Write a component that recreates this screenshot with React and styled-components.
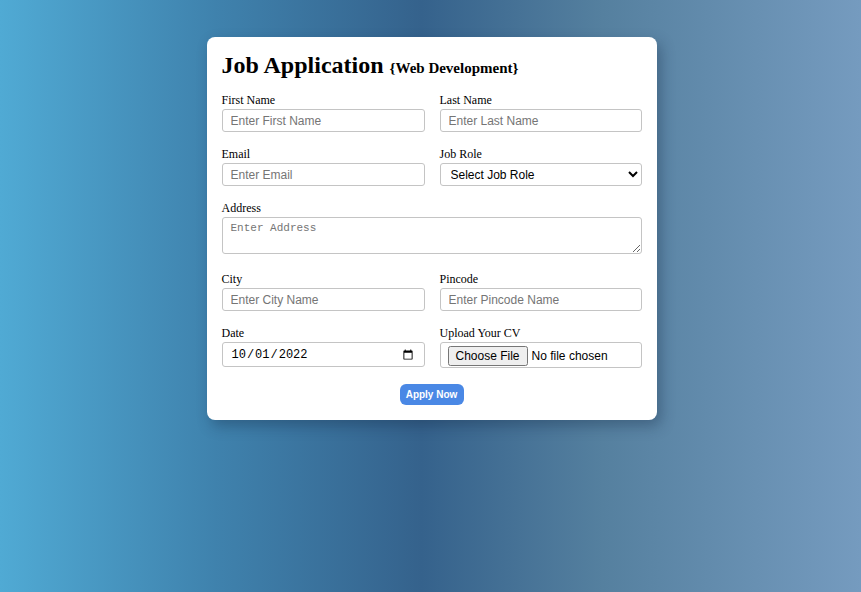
import React from 'react'
import styled, { createGlobalStyle } from 'styled-components'

const GlobalStyle = createGlobalStyle`
  html, body {
    margin: 0;
    padding: 0;
  }
  body {
    min-height: 100vh;
    background: linear-gradient(to right, #50aad4 0%, #3f82ad 25%, #35628c 49%, #55809f 70%, #759bbf 100%);
    font-family: "Liberation Serif", "Times New Roman", serif;
  }
`

const Page = styled.div`
  min-height: 100vh;
  display: flex;
  justify-content: center;
  align-items: flex-start;
  padding: 37px 0 0 2px;
  box-sizing: border-box;
`

const Card = styled.form`
  width: 450px;
  box-sizing: border-box;
  background: #ffffff;
  border-radius: 8px;
  padding: 13px 15px 15px;
  box-shadow: 4px 6px 14px rgba(20, 40, 70, 0.35);
`

const Title = styled.h1`
  margin: 0 0 10px;
  font-size: 24px;
  font-weight: bold;
  line-height: 30px;
  color: #000;

  span {
    font-size: 15px;
  }
`

const Grid = styled.div`
  display: grid;
  grid-template-columns: 203px 202px;
  column-gap: 15px;
  row-gap: 15px;
`

const Field = styled.div`
  display: flex;
  flex-direction: column;
  min-width: 0;
  grid-column: ${(p) => (p.wide ? '1 / 3' : 'auto')};
`

const Label = styled.label`
  font-size: 12px;
  line-height: 14px;
  margin-bottom: 2px;
  color: #000;
`

const Input = styled.input`
  width: 100%;
  height: 23px;
  box-sizing: border-box;
  border: 1px solid #c4c4c4;
  border-radius: 3px;
  padding: 0 8px;
  font-family: "Liberation Sans", Arial, sans-serif;
  font-size: 12px;
  color: #000;
  outline: none;

  &::placeholder {
    color: #757575;
  }
`

const DateInput = styled(Input)`
  height: 25px;
  font-family: "Liberation Mono", monospace;
`

const FileInput = styled(Input)`
  height: 26px;
  padding: 3px 7px;
  font-size: 12px;
`

const Select = styled.select`
  width: 100%;
  height: 23px;
  box-sizing: border-box;
  border: 1px solid #c4c4c4;
  border-radius: 3px;
  padding: 0 6px;
  font-family: "Liberation Sans", Arial, sans-serif;
  font-size: 12px;
  color: #000;
  background: #fff;
`

const TextArea = styled.textarea`
  width: 100%;
  height: 37px;
  margin-bottom: 3px;
  box-sizing: border-box;
  border: 1px solid #c4c4c4;
  border-radius: 3px;
  padding: 4px 8px;
  font-family: "Liberation Mono", monospace;
  font-size: 11px;
  resize: vertical;

  &::placeholder {
    color: #757575;
  }
`

const Actions = styled.div`
  display: flex;
  justify-content: center;
  margin-top: 16px;
`

const ApplyButton = styled.button`
  width: 64px;
  height: 21px;
  border: none;
  border-radius: 6px;
  background: #4a88e5;
  color: #fff;
  font-family: "Liberation Sans", Arial, sans-serif;
  font-size: 10px;
  font-weight: bold;
  cursor: pointer;
  padding: 0;
`

export default function App() {
  return (
    <>
      <GlobalStyle />
      <Page>
        <Card onSubmit={(e) => e.preventDefault()}>
          <Title>
            Job Application <span>{'{Web Development}'}</span>
          </Title>
          <Grid>
            <Field>
              <Label>First Name</Label>
              <Input type="text" placeholder="Enter First Name" />
            </Field>
            <Field>
              <Label>Last Name</Label>
              <Input type="text" placeholder="Enter Last Name" />
            </Field>
            <Field>
              <Label>Email</Label>
              <Input type="email" placeholder="Enter Email" />
            </Field>
            <Field>
              <Label>Job Role</Label>
              <Select defaultValue="">
                <option value="">Select Job Role</option>
                <option value="frontend">Frontend Developer</option>
                <option value="backend">Backend Developer</option>
                <option value="fullstack">Full Stack Developer</option>
              </Select>
            </Field>
            <Field wide>
              <Label>Address</Label>
              <TextArea placeholder="Enter Address" />
            </Field>
            <Field>
              <Label>City</Label>
              <Input type="text" placeholder="Enter City Name" />
            </Field>
            <Field>
              <Label>Pincode</Label>
              <Input type="text" placeholder="Enter Pincode Name" />
            </Field>
            <Field>
              <Label>Date</Label>
              <DateInput type="date" defaultValue="2022-10-01" />
            </Field>
            <Field>
              <Label>Upload Your CV</Label>
              <FileInput type="file" />
            </Field>
          </Grid>
          <Actions>
            <ApplyButton type="submit">Apply Now</ApplyButton>
          </Actions>
        </Card>
      </Page>
    </>
  )
}
